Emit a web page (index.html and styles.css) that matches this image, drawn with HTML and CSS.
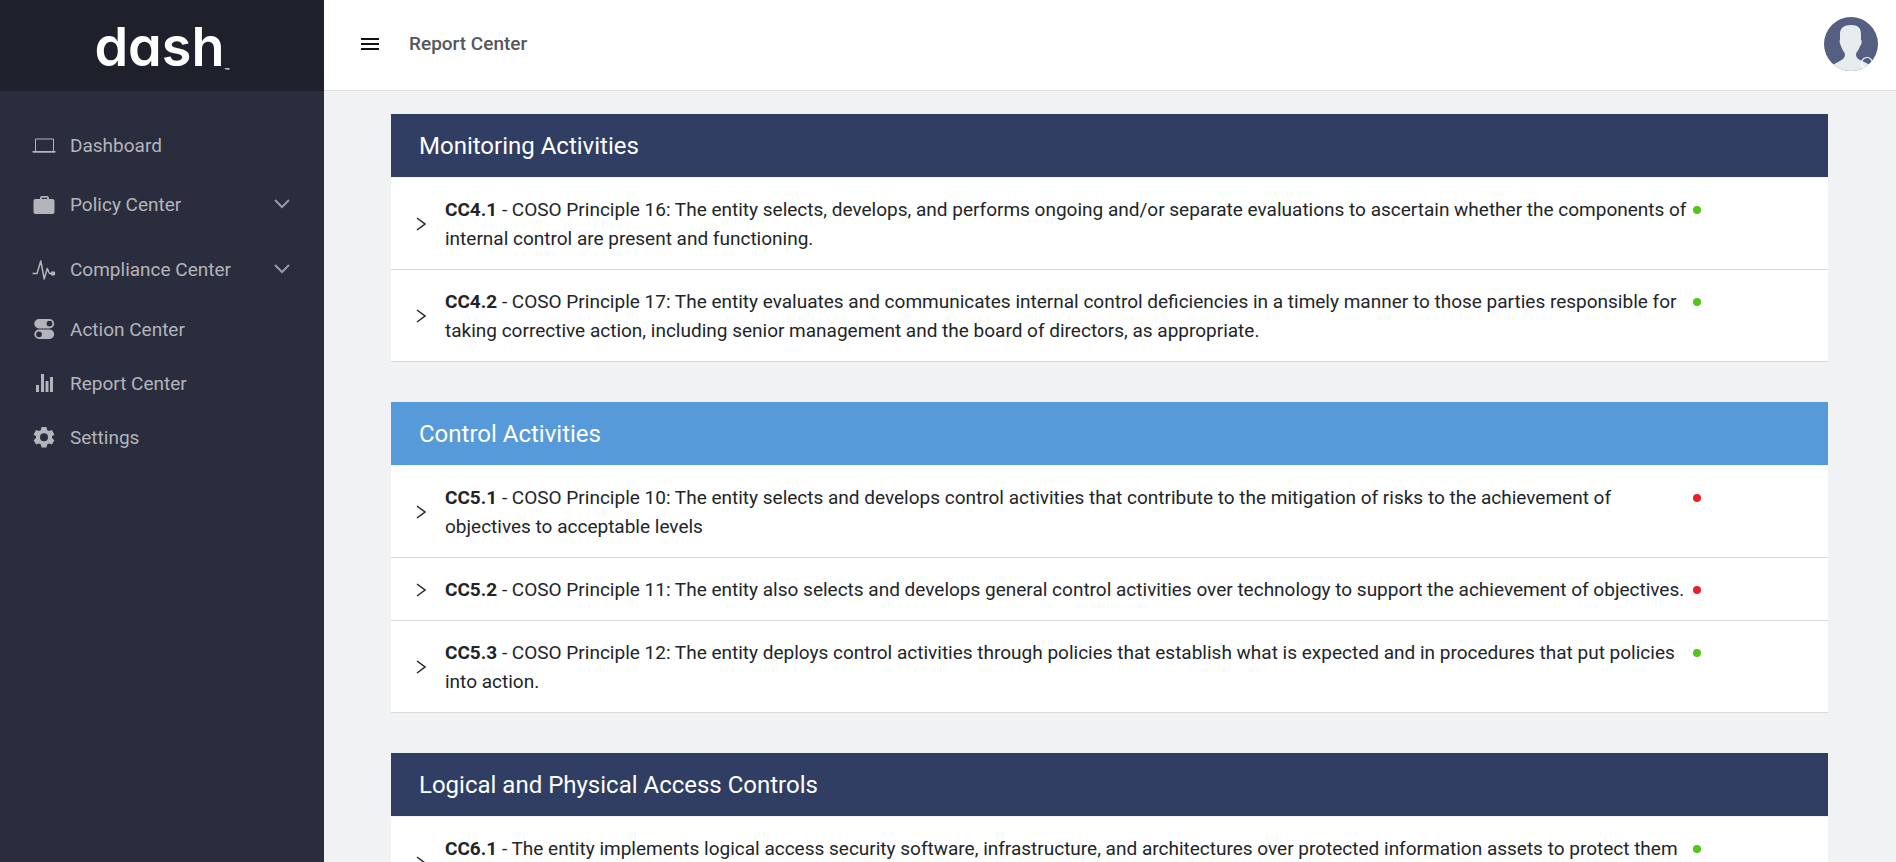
FILE: index.html
```html
<!DOCTYPE html>
<html lang="en">
  <head>
    <meta charset="utf-8">
    <title>Report Center</title>
    <link rel="stylesheet" href="styles.css">
  </head>
  <body>
    <aside class="sidebar">
      <a class="brand" href="#">dash<span class="brand-tm">™</span></a>
      <nav>
        <ul class="menu">
          <li>
            <a class="menu-link" href="#">
              <svg class="menu-icon" viewBox="0 0 24 24"><path d="M3.500 18v-12h18v12" fill="none" stroke="currentColor"/><path d="M.5 18h23v1q0 .8-1 .8h-21q-1 0-1-.8z"/></svg>
              Dashboard
            </a>
          </li>
          <li class="has-children">
            <a class="menu-link" href="#">
              <svg class="menu-icon" viewBox="0 0 24 24"><path fill-rule="evenodd" d="M8 6V5q0-2 2-2h5q2 0 2 2v1h3.500q2 0 2 2v11q0 2-2 2h-17q-2 0-2-2V8q0-2 2-2zM9.800 6h5.400V4.800H9.800z"/></svg>
              Policy Center
              <svg class="menu-caret" viewBox="0 0 16 10"><path d="M1 1l7 7 7-7"/></svg>
            </a>
          </li>
          <li class="has-children">
            <a class="menu-link" href="#">
              <svg class="menu-icon" viewBox="0 0 24 24"><path d="M.5 15.500H5L8.800 3l3.400 18 3.100-10.500 2.200 5H20" fill="none" stroke="currentColor" stroke-width="1.500" stroke-linejoin="round"/><circle cx="21" cy="15.500" r="2.300"/></svg>
              Compliance Center
              <svg class="menu-caret" viewBox="0 0 16 10"><path d="M1 1l7 7 7-7"/></svg>
            </a>
          </li>
          <li>
            <a class="menu-link" href="#">
              <svg class="menu-icon" viewBox="0 0 24 24"><path fill-rule="evenodd" d="M7 2h10.500a4.700 4.700 0 0 1 0 9.400H7A4.700 4.700 0 0 1 7 2zM17.500 3.700a2.900 2.900 0 1 0 0 5.800 2.900 2.900 0 0 0 0-5.800zM7 12.600h10.500a4.700 4.700 0 0 1 0 9.400H7a4.700 4.700 0 0 1 0-9.400zM7 14.400a2.900 2.900 0 1 0 0 5.800 2.900 2.900 0 0 0 0-5.800z"/></svg>
              Action Center
            </a>
          </li>
          <li>
            <a class="menu-link" href="#">
              <svg class="menu-icon" viewBox="0 0 24 24"><path d="M4 14h3v7H4zM9 3h3v18H9zM13.500 10h3v11h-3zM18 6h3v15h-3z"/></svg>
              Report Center
            </a>
          </li>
          <li>
            <a class="menu-link" href="#">
              <svg class="menu-icon" viewBox="0 0 24 24"><path fill-rule="evenodd" d="M9.500 2h5l.6 3.100 1.800 1 3-1 2.500 4.300-2.400 2v1.700l2.400 2.100-2.500 4.300-3-1-1.800 1-.6 3h-5l-.6-3-1.800-1-3 1-2.500-4.300 2.400-2.100v-1.700l-2.400-2 2.500-4.300 3 1 1.800-1zM12 8.200a4 4 0 1 0 0 8 4 4 0 0 0 0-8z"/></svg>
              Settings
            </a>
          </li>
        </ul>
      </nav>
    </aside>

    <div class="page">
      <header class="topbar">
        <button class="menu-toggle" type="button" aria-label="Toggle menu">
          <svg viewBox="0 0 18 14"><path d="M0 2h18M0 7h18M0 12h18"/></svg>
        </button>
        <h1 class="page-title">Report Center</h1>
        <button class="avatar" type="button" aria-label="Account">
          <svg viewBox="0 0 54 54">
            <defs><clipPath id="avatar-clip"><circle cx="27" cy="27" r="27"/></clipPath></defs>
            <g clip-path="url(#avatar-clip)">
              <path fill="#555f82" d="M0 0h54v54H0z"/>
              <path fill="#e7edee" d="M27 8c7 0 10 3 10 9v6c1 0 1 4-1 6-1 4-3 5-4 8 0 4 2 5 6 7 5 2 8 4 9 6v6H7v-6c1-2 5-4 9-6 3-2 5-3 5-7-1-3-3-4-4-8-1-2-2-6-1-6v-6c0-6 4-9 11-9z"/>
              <circle cx="43" cy="46" r="5.500" fill="none" stroke="#fff" stroke-width="1.200"/>
            </g>
          </svg>
        </button>
      </header>

      <main class="content">
        <section class="panel">
          <h2 class="panel-title">Monitoring Activities</h2>
          <ul class="controls">
            <li class="control">
              <button class="expand" type="button" aria-label="Expand CC4.1"><svg viewBox="0 0 10 14"><path d="M1 1l8 6-8 6"/></svg></button>
              <p class="control-text"><b>CC4.1</b> - COSO Principle 16: The entity selects, develops, and performs ongoing and/or separate evaluations to ascertain whether the components of internal control are present and functioning.</p>
              <span class="status status-ok"></span>
            </li>
            <li class="control">
              <button class="expand" type="button" aria-label="Expand CC4.2"><svg viewBox="0 0 10 14"><path d="M1 1l8 6-8 6"/></svg></button>
              <p class="control-text"><b>CC4.2</b> - COSO Principle 17: The entity evaluates and communicates internal control deficiencies in a timely manner to those parties responsible for taking corrective action, including senior management and the board of directors, as appropriate.</p>
              <span class="status status-ok"></span>
            </li>
          </ul>
        </section>

        <section class="panel">
          <h2 class="panel-title panel-title-light">Control Activities</h2>
          <ul class="controls">
            <li class="control">
              <button class="expand" type="button" aria-label="Expand CC5.1"><svg viewBox="0 0 10 14"><path d="M1 1l8 6-8 6"/></svg></button>
              <p class="control-text"><b>CC5.1</b> - COSO Principle 10: The entity selects and develops control activities that contribute to the mitigation of risks to the achievement of objectives to acceptable levels</p>
              <span class="status status-fail"></span>
            </li>
            <li class="control">
              <button class="expand" type="button" aria-label="Expand CC5.2"><svg viewBox="0 0 10 14"><path d="M1 1l8 6-8 6"/></svg></button>
              <p class="control-text"><b>CC5.2</b> - COSO Principle 11: The entity also selects and develops general control activities over technology to support the achievement of objectives.</p>
              <span class="status status-fail"></span>
            </li>
            <li class="control">
              <button class="expand" type="button" aria-label="Expand CC5.3"><svg viewBox="0 0 10 14"><path d="M1 1l8 6-8 6"/></svg></button>
              <p class="control-text"><b>CC5.3</b> - COSO Principle 12: The entity deploys control activities through policies that establish what is expected and in procedures that put policies into action.</p>
              <span class="status status-ok"></span>
            </li>
          </ul>
        </section>

        <section class="panel">
          <h2 class="panel-title">Logical and Physical Access Controls</h2>
          <ul class="controls">
            <li class="control">
              <button class="expand" type="button" aria-label="Expand CC6.1"><svg viewBox="0 0 10 14"><path d="M1 1l8 6-8 6"/></svg></button>
              <p class="control-text"><b>CC6.1</b> - The entity implements logical access security software, infrastructure, and architectures over protected information assets to protect them from security events.</p>
              <span class="status status-ok"></span>
            </li>
          </ul>
        </section>
      </main>
    </div>
  </body>
</html>
```

FILE: styles.css
```css
* {
  box-sizing: border-box;
}

body {
  display: flex;
  height: 100vh;
  margin: 0;
  overflow: hidden;
  font-family: Roboto, "Liberation Sans", sans-serif;
  font-size: 19px;
  color: #212529;
  background: #f0f2f4;
}

h1, h2, p, ul {
  margin: 0;
  padding: 0;
}

ul {
  list-style: none;
}

button {
  padding: 0;
  border: 0;
  background: none;
  cursor: pointer;
}

svg {
  display: block;
}

/* Sidebar */
.sidebar {
  flex: 0 0 324px;
  background: #292d3d;
}

.brand {
  display: flex;
  align-items: center;
  justify-content: center;
  height: 91px;
  padding-top: 2px;
  font-family: Inter, sans-serif;
  font-size: 54px;
  font-weight: 600;
  font-feature-settings: "cv11";
  color: #fff;
  background: #1e212b;
  text-decoration: none;
}

.brand-tm {
  align-self: flex-end;
  padding-bottom: 16px;
  font-size: 8px;
  line-height: 8px;
}

.menu {
  padding-top: 27px;
}

.menu-link {
  display: flex;
  align-items: center;
  height: 54px;
  padding: 0 34px 0 32px;
  color: #b4b5ba;
  text-decoration: none;
}

.has-children .menu-link {
  height: 65px;
}

.menu-icon {
  width: 24px;
  height: 24px;
  margin-right: 14px;
  fill: currentColor;
}

.menu-caret {
  width: 16px;
  height: 10px;
  margin: 0 0 2px auto;
  fill: none;
  stroke: #9a9ca5;
  stroke-width: 2;
}

/* Top bar */
.page {
  flex: 1;
  min-width: 0;
}

.topbar {
  display: flex;
  align-items: center;
  height: 91px;
  padding: 0 18px 2px 37px;
  border-bottom: 1px solid #e0e1e2;
  background: #fff;
}

.menu-toggle svg {
  width: 18px;
  height: 14px;
  stroke: #111;
  stroke-width: 2;
}

.page-title {
  margin-left: 30px;
  padding-bottom: 2px;
  font-size: 19px;
  font-weight: 500;
  color: #55575a;
}

.avatar {
  margin-left: auto;
}

.avatar svg {
  width: 54px;
  height: 54px;
}

/* Report panels */
.content {
  padding: 23px 68px 0 67px;
}

.panel {
  margin-bottom: 40px;
}

.panel-title {
  padding: 2px 28px 0;
  font-size: 24px;
  font-weight: 400;
  line-height: 61px;
  color: #fff;
  background: #303e63;
}

.panel-title-light {
  background: #569ad9;
}

.controls {
  border-top: 1px solid #f0f1f4;
  background: #fff;
}

.control {
  display: flex;
  padding: 17px 127px 16px 25px;
  border-bottom: 1px solid #d9d9d9;
}

.expand {
  align-self: center;
  margin-right: 19px;
}

.expand svg {
  width: 10px;
  height: 14px;
  fill: none;
  stroke: #262626;
  stroke-width: 1.5;
}

.control-text {
  flex: 1;
  line-height: 29px;
}

.control-text b {
  font-weight: 700;
}

.status {
  width: 8px;
  height: 8px;
  margin: 11px 0 0 4px;
  border-radius: 50%;
}

.status-ok {
  background: #52c41a;
}

.status-fail {
  background: #ea2027;
}
```
